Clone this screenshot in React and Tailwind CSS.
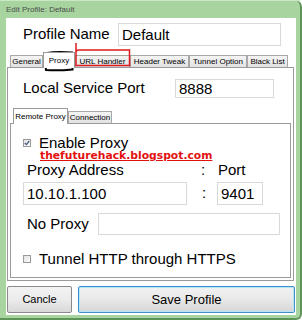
import React from "react";

const font = "font-['Liberation_Sans',Arial,sans-serif]";

const OuterTab = ({ label, w, selected }) => {
    if (selected) {
        return (
            <div className={`${w} h-[16px] -mb-[1px] relative z-10 bg-white border border-b-0 border-[#9a9a9a] flex items-center justify-center text-[8px] leading-none text-black`}>
                {label}
            </div>
        )
    }
    return (
        <div className={`${w} h-[12px] bg-gradient-to-b from-[#f4f4f4] to-[#e2e2e2] border border-b-0 border-[#a8a8a8] flex items-center justify-center text-[8px] leading-none text-black`}>
            {label}
        </div>
    )
}

const Field = ({ w, h, value, extra = "" }) => (
    <div className={`${w} ${h} bg-white border border-[#d9d9d9] flex items-center pl-[3px] text-[15px] leading-none text-black ${extra}`}>
        {value}
    </div>
)

const CheckBox = ({ checked }) => (
    <div className="w-[8px] h-[8px] border border-[#9a9a9a] bg-gradient-to-br from-[#e4e4e4] to-[#fafafa] flex items-center justify-center">
        {checked && (
            <svg width="6" height="6" viewBox="0 0 6 6">
                <path d="M0.8 3 L2.4 4.6 L5.2 1" fill="none" stroke="#4b5f86" strokeWidth="1.3" />
            </svg>
        )}
    </div>
)

const App = () => {
    return (
        <div className={`relative w-[302px] h-[320px] bg-[#a7d49f] border-r-2 border-b-2 border-[#5f9459] rounded-tr-[7px] rounded-br-[6px] flex flex-col ${font}`}>
            <div className="h-[18px] pl-[6px] flex items-center text-[8px] text-[#4d4d4d] border-t border-[#c9e8c3]">
                Edit Profile: Default
            </div>

            <div className="ml-[6px] w-[290px] h-[297px] bg-white flex flex-col">
                <div className="mt-[5px] h-[23px] flex items-center pl-[17px]">
                    <div className="w-[95px] text-[15px] text-black">Profile Name</div>
                    <Field w="w-[163px]" h="h-[23px]" value="Default" />
                </div>

                <div className="ml-[1px] w-[287px] mt-[6px] flex flex-col">
                    <div className="h-[15px] flex items-end pl-[3px]">
                        <OuterTab label="General" w="w-[33px]" />
                        <OuterTab label="Proxy" w="w-[32px]" selected />
                        <OuterTab label="URL Handler" w="w-[55px]" />
                        <OuterTab label="Header Tweak" w="w-[59px]" />
                        <OuterTab label="Tunnel Option" w="w-[58px]" />
                        <OuterTab label="Black List" w="w-[41px]" />
                    </div>

                    <div className="h-[214px] border border-[#9a9a9a] flex flex-col">
                        <div className="mt-[11px] h-[19px] flex items-center pl-[15px]">
                            <div className="w-[152px] text-[15px] text-black">Local Service Port</div>
                            <Field w="w-[99px]" h="h-[19px]" value="8888" />
                        </div>

                        <div className="mt-[10px] mx-[2px] flex flex-col">
                            <div className="h-[15px] flex items-end pl-[3px]">
                                <div className="w-[55px] h-[16px] -mb-[1px] relative z-10 bg-white border border-b-0 border-[#9a9a9a] flex items-center justify-center text-[8px] leading-none text-black">
                                    Remote Proxy
                                </div>
                                <div className="w-[44px] h-[12px] bg-gradient-to-b from-[#f4f4f4] to-[#e2e2e2] border border-b-0 border-[#a8a8a8] flex items-center justify-center text-[8px] leading-none text-black">
                                    Connection
                                </div>
                            </div>

                            <div className="h-[155px] border border-[#9a9a9a] flex flex-col">
                                <div className="mt-[12px] h-[14px] flex items-center pl-[12px]">
                                    <CheckBox checked />
                                    <div className="ml-[8px] text-[15px] leading-[14px] text-black">Enable Proxy</div>
                                </div>

                                <div className="h-[12px] pl-[29px] font-['DejaVu_Sans',Verdana,sans-serif] font-bold text-[10.75px] leading-[12px] text-[#e31010] underline">
                                    thefuturehack.blogspot.com
                                </div>

                                <div className="h-[16px] flex items-center pl-[16px] text-[15px] leading-[16px] text-black">
                                    <div className="w-[174px]">Proxy Address</div>
                                    <div className="w-[17px]">:</div>
                                    <div>Port</div>
                                </div>

                                <div className="mt-[4px] h-[23px] flex items-center pl-[12px]">
                                    <Field w="w-[164px]" h="h-[23px]" value="10.10.1.100" />
                                    <div className="w-[30px] pl-[15px] text-[15px] text-black">:</div>
                                    <Field w="w-[46px]" h="h-[23px]" value="9401" />
                                </div>

                                <div className="mt-[8px] h-[22px] flex items-center pl-[16px]">
                                    <div className="w-[71px] text-[15px] text-black">No Proxy</div>
                                    <Field w="w-[182px]" h="h-[22px]" value="" />
                                </div>

                                <div className="mt-[16px] h-[16px] flex items-center pl-[12px]">
                                    <CheckBox />
                                    <div className="ml-[8px] text-[15px] leading-[16px] text-black">Tunnel HTTP through HTTPS</div>
                                </div>
                            </div>
                        </div>
                    </div>
                </div>

                <div className="mt-[5px] h-[27px] flex">
                    <div className="ml-[1px] w-[65px] h-[27px] rounded-[2px] border border-[#8a8a8a] bg-gradient-to-b from-[#f3f3f3] via-[#ebebeb] to-[#d8d8d8] flex items-center justify-center text-[11px] text-black">
                        Cancle
                    </div>
                    <div className="ml-[6px] w-[217px] h-[27px] rounded-[2px] border border-[#3c8fc7] bg-gradient-to-b from-[#f2f2f2] via-[#e8e8e8] to-[#d6d6d6] flex items-center justify-center text-[13px] text-black shadow-[inset_0_0_0_1px_#b8e4f8]">
                        Save Profile
                    </div>
                </div>
            </div>

            <svg className="absolute left-0 top-0 pointer-events-none" width="302" height="320">
                <path d="M47 53 C55 51.5, 65 52, 72 52.5 L72.5 69.5 C62 70.5, 52 70.5, 46 70 C45 64, 45 58, 47 53 Z" fill="none" stroke="#000" strokeWidth="2" />
                <path d="M76 43 L76 65.5 L129.5 65.5 L129.5 50 L78.5 50 Q76 50 76 52.5" fill="none" stroke="#e01b1b" strokeWidth="1.5" />
            </svg>
        </div>
    )
}

export default App;
